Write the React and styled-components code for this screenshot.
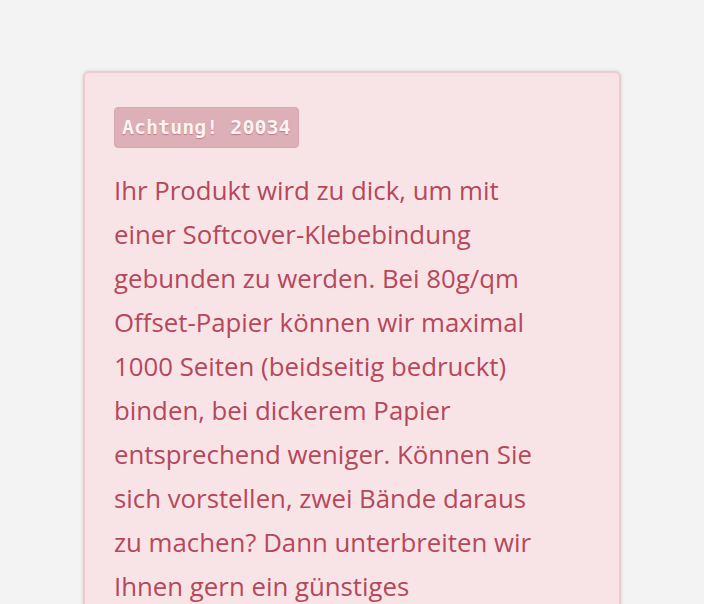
import React from "react";
import styled, { createGlobalStyle } from "styled-components";

const Global = createGlobalStyle`
  html, body {
    margin: 0;
    padding: 0;
    background: #f3f3f3;
  }
`;

const Page = styled.div`
  width: 704px;
  height: 604px;
  overflow: hidden;
  padding: 71px 0 0 83px;
  box-sizing: border-box;
`;

const Alert = styled.div`
  width: 538px;
  box-sizing: border-box;
  background: #f8e4e7;
  border: 2px solid #efcbd0;
  border-radius: 6px;
  box-shadow: 0 0 4px rgba(0, 0, 0, 0.12);
  padding: 34px 29px 40px;
`;

const Badge = styled.span`
  display: inline-block;
  background: #ddafb6;
  border: 1px solid #d8a6ae;
  border-radius: 4px;
  padding: 8px 7px 8px;
  font-family: "DejaVu Sans Mono", "Liberation Mono", monospace;
  font-weight: bold;
  font-size: 20px;
  line-height: 23px;
  color: #fbf3f4;
  text-shadow: 0 1px 1px rgba(150, 60, 80, 0.45);
`;

const Message = styled.p`
  margin: 20px 0 0;
  max-width: 434px;
  font-family: "Open Sans", "Noto Sans", sans-serif;
  font-size: 25.8px;
  line-height: 44px;
  color: #b5485b;
`;

export default function App() {
  return (
    <>
      <Global />
      <Page>
        <Alert>
          <Badge>Achtung! 20034</Badge>
          <Message>
            Ihr Produkt wird zu dick, um mit einer Softcover-Klebebindung
            gebunden zu werden. Bei 80g/qm Offset-Papier können wir maximal
            1000 Seiten (beidseitig bedruckt) binden, bei dickerem Papier
            entsprechend weniger. Können Sie sich vorstellen, zwei Bände daraus
            zu machen? Dann unterbreiten wir Ihnen gern ein günstiges
            Sonderangebot dafür.
          </Message>
        </Alert>
      </Page>
    </>
  );
}
